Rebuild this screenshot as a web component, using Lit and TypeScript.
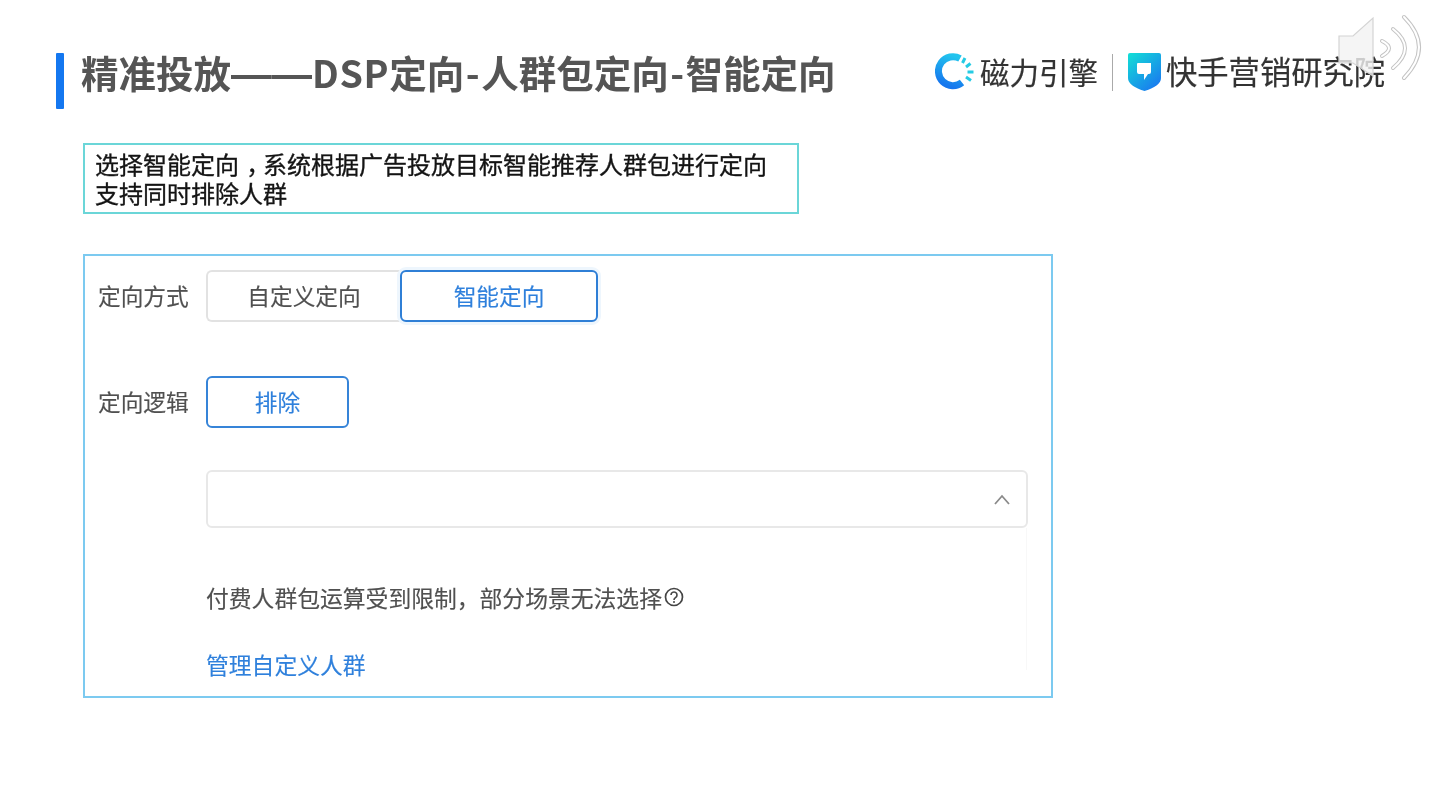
import { LitElement, html, css } from "lit";
import { customElement } from "lit/decorators.js";

@customElement("app-root")
export class AppRoot extends LitElement {
  static styles = css`
    :host {
      display: block;
      position: relative;
      width: 1440px;
      height: 810px;
      overflow: hidden;
      background: #fff;
      font-family: "Noto Sans CJK SC", "Liberation Sans", sans-serif;
      color: #555;
      filter: blur(0.4px);
    }
    .header {
      display: flex;
      align-items: flex-start;
      padding: 53px 0 0 56px;
      height: 56px;
    }
    .accent {
      width: 8px;
      height: 56px;
      background: #1477f0;
      border-radius: 1px;
      flex: none;
    }
    h1 {
      margin: 0 0 0 17px;
      font-size: 37.5px;
      line-height: 38px;
      font-weight: 700;
      color: #555;
      white-space: nowrap;
      width: 854px;
      flex: none;
    }
    .dash {
      font-family: "Liberation Sans", sans-serif;
      font-size: 40.5px;
    }
    .hy {
      padding: 0 1.5px;
    }
    .lat {
      letter-spacing: 0.7px;
    }
    .brand {
      display: flex;
      align-items: center;
      height: 38px;
    }
    .brand-text {
      color: #333;
      white-space: nowrap;
      line-height: 38px;
      padding-bottom: 2px;
      -webkit-text-stroke: 0.2px #333;
    }
    .mag {
      font-size: 29.5px;
      margin-left: 4px;
    }
    .sep {
      width: 1px;
      height: 37px;
      background: #aaa;
      margin: 0 15px 0 14px;
    }
    .ks {
      font-size: 31.3px;
      margin-left: 5px;
    }
    .callout {
      margin: 34px 0 0 83px;
      width: 716px;
      height: 71px;
      box-sizing: border-box;
      border: 2px solid #6bd6d8;
      padding: 4px 0 0 10px;
      font-size: 24px;
      line-height: 29px;
      color: #141414;
      -webkit-text-stroke: 0.35px #141414;
      white-space: nowrap;
    }
    .comma {
      display: inline-block;
      width: 1em;
      text-indent: 0.3em;
    }
    .panel {
      margin: 40px 0 0 83px;
      width: 970px;
      height: 444px;
      box-sizing: border-box;
      border: 2px solid #7ccaf0;
      padding: 14px 24px 0 13px;
      font-size: 22.7px;
      line-height: 32px;
      -webkit-text-stroke: 0.15px currentColor;
    }
    .row {
      display: flex;
      align-items: center;
    }
    .label {
      width: 108px;
      flex: none;
      color: #505050;
      white-space: nowrap;
    }
    .seg {
      display: flex;
      height: 52px;
    }
    .seg-a,
    .seg-b,
    .btn {
      display: flex;
      align-items: center;
      justify-content: center;
      box-sizing: border-box;
      border-radius: 6px;
      background: #fff;
    }
    .seg-a {
      width: 194px;
      border: 2px solid #e2e2e2;
      border-right: none;
      border-radius: 6px 0 0 6px;
      color: #505050;
    }
    .seg-b {
      width: 198px;
      border: 2px solid #2f7fd6;
      color: #2f80dc;
      box-shadow: 0 0 0 3px #eef6fd;
    }
    .logic {
      margin-top: 54px;
    }
    .btn {
      width: 143px;
      height: 52px;
      border: 2px solid #3684d8;
      color: #2f80dc;
    }
    .stack {
      margin-left: 108px;
    }
    .select {
      margin-top: 42px;
      width: 822px;
      height: 58px;
      box-sizing: border-box;
      border: 2px solid #e8e8e8;
      border-radius: 6px;
      display: flex;
      align-items: center;
      justify-content: flex-end;
      padding-right: 15px;
    }
    .drop {
      width: 821px;
      height: 142px;
      box-sizing: border-box;
      border-right: 1px solid #f8f8f8;
      padding-top: 54px;
    }
    .note {
      display: flex;
      align-items: flex-start;
      font-size: 22.8px;
      color: #505050;
      white-space: nowrap;
    }
    .note svg {
      margin: 5px 0 0 2px;
      flex: none;
    }
    .link {
      margin-top: 35px;
      font-size: 22.8px;
      color: #2f80dc;
      white-space: nowrap;
    }
    .speaker {
      position: absolute;
      left: 1338px;
      top: 14px;
    }
  `;

  render() {
    return html`
      <div class="header">
        <div class="accent"></div>
        <h1>精准投放<span class="dash">——</span><span class="lat">DSP</span>定向<span class="hy">-</span>人群包定向<span class="hy">-</span>智能定向</h1>
        <div class="brand">
          <svg width="41" height="38" viewBox="0 0 41 38">
            <defs>
              <linearGradient id="c" x1="0.7" y1="0" x2="0.4" y2="1">
                <stop offset="0" stop-color="#22c4ee" />
                <stop offset="1" stop-color="#1677ee" />
              </linearGradient>
            </defs>
            <path d="M25 5.500A14.500 14.500 0 1 0 27 29.500" fill="none" stroke="url(#c)" stroke-width="7" />
            <g stroke="#25cbe4" stroke-width="3" fill="none">
              <path d="M27.500 10L30 5M31 14L35.500 10.500M32.500 19H38.500M31 24L36 27.500" />
            </g>
          </svg>
          <span class="brand-text mag">磁力引擎</span>
          <span class="sep"></span>
          <svg width="33" height="38" viewBox="0 0 33 38">
            <defs>
              <linearGradient id="s" x1="0" y1="0" x2="0.8" y2="1">
                <stop offset="0" stop-color="#12e0d6" />
                <stop offset="1" stop-color="#1a78f0" />
              </linearGradient>
            </defs>
            <path d="M2 0H31Q33 0 33 2V25Q33 33 16.500 38Q0 33 0 25V2Q0 0 2 0Z" fill="url(#s)" />
            <path d="M9 11Q9 10 10 10H23V19Q23 21 21 21H20L16 27V21H11Q9 21 9 19Z" fill="#fff" />
          </svg>
          <span class="brand-text ks">快手营销研究院</span>
        </div>
      </div>

      <div class="callout">选择智能定向<span class="comma">，</span>系统根据广告投放目标智能推荐人群包进行定向<br />支持同时排除人群</div>

      <div class="panel">
        <div class="row">
          <div class="label">定向方式</div>
          <div class="seg">
            <div class="seg-a">自定义定向</div>
            <div class="seg-b">智能定向</div>
          </div>
        </div>
        <div class="row logic">
          <div class="label">定向逻辑</div>
          <div class="btn">排除</div>
        </div>
        <div class="stack">
          <div class="select">
            <svg width="18" height="12" viewBox="0 0 18 12">
              <path d="M2 11L9 3L16 11" fill="none" stroke="#8a8a8a" stroke-width="1.800" />
            </svg>
          </div>
          <div class="drop">
            <div class="note">
              付费人群包运算受到限制，部分场景无法选择
              <svg width="20" height="20" viewBox="0 0 20 20">
                <circle cx="10" cy="10" r="8.500" fill="none" stroke="#444" stroke-width="1.700" />
                <path d="M7 8a3 3 0 1 1 4.500 2.600Q10 11.500 10 13" fill="none" stroke="#444" stroke-width="1.600" />
                <circle cx="10" cy="15" r="1" fill="#444" />
              </svg>
            </div>
            <div class="link">管理自定义人群</div>
          </div>
        </div>
      </div>

      <svg class="speaker" width="84" height="68" viewBox="0 0 84 68">
        <path d="M1 22H15L35 4V62L15 49H1Z" fill="#f2f2f2" fill-opacity="0.8" stroke="#d4d4d4" stroke-width="1.200" />
        <g fill="none" stroke-linecap="round">
          <g stroke="#c4c4c4" stroke-width="4">
            <path d="M44 27Q58 34 44 42" />
            <path d="M55 15Q79 34 55 54" />
            <path d="M66 3Q96 33 66 64" />
          </g>
          <g stroke="#fff" stroke-width="2">
            <path d="M44 27Q58 34 44 42" />
            <path d="M55 15Q79 34 55 54" />
            <path d="M66 3Q96 33 66 64" />
          </g>
        </g>
      </svg>
    `;
  }
}
